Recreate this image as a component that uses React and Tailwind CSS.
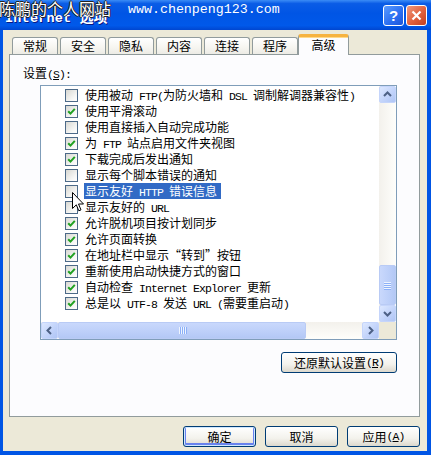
import React from "react";

const latin = "font-['Liberation_Mono',monospace] text-[11.5px] tracking-[-0.9px] whitespace-pre";

function Txt({ s }) {
  const parts = s.split(/([\x20-\x7e]+)/).filter(Boolean);
  return (
    <>
      {parts.map((p, i) =>
        /^[\x20-\x7e]+$/.test(p) ? (
          <span key={i} className={latin}>{p}</span>
        ) : (
          <span key={i}>{p}</span>
        )
      )}
    </>
  );
}

function Check({ checked }) {
  return (
    <span className="w-[13px] h-[13px] shrink-0 border border-[#4d6a88] bg-[linear-gradient(135deg,#d8d8d2,#f7f7f5_70%,#ffffff)] flex items-center justify-center">
      {checked && (
        <svg width="9" height="9" viewBox="0 0 9 9">
          <path d="M1.2 4.2 L3.5 6.6 L7.8 1.8" stroke="#21a121" strokeWidth="2" fill="none" />
        </svg>
      )}
    </span>
  );
}

const rows = [
  ["使用被动 FTP(为防火墙和 DSL 调制解调器兼容性)", false],
  ["使用平滑滚动", true],
  ["使用直接插入自动完成功能", false],
  ["为 FTP 站点启用文件夹视图", true],
  ["下载完成后发出通知", true],
  ["显示每个脚本错误的通知", false],
  ["显示友好 HTTP 错误信息", false, true],
  ["显示友好的 URL", false],
  ["允许脱机项目按计划同步", true],
  ["允许页面转换", true],
  ["在地址栏中显示“转到”按钮", true],
  ["重新使用启动快捷方式的窗口", true],
  ["自动检查 Internet Explorer 更新", true],
  ["总是以 UTF-8 发送 URL (需要重启动)", true],
];

const arrowPaths = {
  up: "M4 9 L7.5 5.5 L11 9",
  down: "M4 6 L7.5 9.5 L11 6",
  left: "M9 4 L5.5 7.5 L9 11",
  right: "M6 4 L9.5 7.5 L6 11",
};

function ArrowBtn({ dir }) {
  return (
    <div className="w-[17px] h-[17px] shrink-0 rounded-[2px] border border-[#c5d5fb] bg-[linear-gradient(135deg,#dde8ff,#c0d2fa_60%,#afc5f5)] flex items-center justify-center">
      <svg width="15" height="15" viewBox="0 0 15 15">
        <path d={arrowPaths[dir]} stroke="#4d6185" strokeWidth="2" fill="none" />
      </svg>
    </div>
  );
}

function Btn({ children, className, def }) {
  return (
    <div
      className={
        "h-[21px] rounded-[3px] border border-[#003c74] bg-[linear-gradient(180deg,#ffffff,#f3f2ec_60%,#dcd8cd)] flex items-center justify-center text-[12px] leading-none " +
        (def ? "shadow-[inset_0_0_0_1px_#cee7ff,inset_0_-1px_0_2px_#6982ee] " : "") +
        className
      }
    >
      {children}
    </div>
  );
}

function Tab({ label }) {
  return (
    <div className="w-[46px] h-[17px] mb-[1px] rounded-t-[3px] border border-b-0 border-[#919b9c] bg-[linear-gradient(180deg,#ffffff,#f6f5f0_60%,#ecebe5)] flex items-center justify-center text-[12px] leading-none">
      {label}
    </div>
  );
}

export default function App() {
  return (
    <div className="relative w-[431px] h-[455px] overflow-hidden bg-[#0055e5] font-['Noto_Sans_CJK_SC',sans-serif] text-[12px] text-black select-none">
      {/* title bar */}
      <div className="h-[30px] flex items-center pl-[5px] pr-[4px] bg-[linear-gradient(180deg,#3b8cf6_0%,#0a5ce6_12%,#0055e5_45%,#0059ea_85%,#0046d0_100%)]">
        <div className="flex-1 pt-[6px] flex items-baseline text-white font-bold [text-shadow:1px_1px_0_#0a1883]">
          <span className="font-['Liberation_Mono',monospace] text-[13.5px] tracking-[0.2px]">Internet</span>
          <span className="ml-[8px] text-[14px]">选项</span>
        </div>
        <div className="flex gap-[2px] pt-[1px]">
          <div className="w-[21px] h-[21px] rounded-[3px] border border-white bg-[linear-gradient(135deg,#5a9bff,#2a6df0_60%,#1c55d8)] flex items-center justify-center text-white font-bold text-[15px] leading-none font-['Liberation_Sans',sans-serif]">
            ?
          </div>
          <div className="w-[21px] h-[21px] rounded-[3px] border border-white bg-[linear-gradient(135deg,#ef9a7e,#e1603c_55%,#c4401f)] flex items-center justify-center">
            <svg width="13" height="13" viewBox="0 0 13 13">
              <path d="M2.5 2.5 L10.5 10.5 M10.5 2.5 L2.5 10.5" stroke="#fff" strokeWidth="2.2" />
            </svg>
          </div>
        </div>
      </div>

      {/* watermark */}
      <div className="absolute left-[-1px] top-[-2px] text-[16px] leading-[20px] text-white [text-shadow:1px_0_0_#222,-1px_0_0_#222,0_1px_0_#222,0_-1px_0_#222]">
        陈鹏的个人网站
      </div>
      <div className="absolute left-[128px] top-[1px] text-[13.3px] leading-[18px] text-white font-['Liberation_Mono',monospace] whitespace-pre">
        www.chenpeng123.com
      </div>

      {/* client area */}
      <div className="ml-[3px] mr-[4px] h-[421px] bg-[#ece9d8] flex flex-col">
        <div className="ml-[6px] mt-[4px] w-[411px] flex flex-col">
          {/* tabs */}
          <div className="relative z-10 h-[21px] mb-[-1px] pl-[3px] flex items-end gap-[2px]">
            {["常规", "安全", "隐私", "内容", "连接", "程序"].map((t) => (
              <Tab key={t} label={t} />
            ))}
            <div className="ml-[-2px] w-[51px] h-[21px] rounded-t-[3px] border-x border-[#919b9c] border-t-[3px] border-t-[#f6b340] bg-[#fcfcfe] flex items-center justify-center pb-[2px] text-[12px] leading-none shadow-[inset_0_1px_0_#ffd98a]">
              高级
            </div>
          </div>
          {/* panel */}
          <div className="h-[363px] border border-[#919b9c] bg-[#fcfcfe] flex flex-col">
            <div className="pl-[13px] pt-[10px] h-[26px] leading-[16px]">
              设置<span className={latin}>(</span>
              <span className={latin + " underline"}>S</span>
              <span className={latin}>):</span>
            </div>
            <div className="ml-[30px] mt-[4px] w-[357px] h-[255px] border border-[#7f9db9] bg-white flex flex-col">
              <div className="flex h-[236px]">
                <div className="flex-1 pt-[1px] pl-[24px] flex flex-col">
                  {rows.map(([label, checked, sel], i) => (
                    <div key={i} className="h-[16px] flex items-center whitespace-nowrap">
                      <Check checked={checked} />
                      <span
                        className={
                          "ml-[6px] px-[1px] h-[16px] leading-[16px] " +
                          (sel ? "bg-[#316ac5] text-white pr-[4px]" : "")
                        }
                      >
                        <Txt s={label} />
                      </span>
                    </div>
                  ))}
                </div>
                {/* vertical scrollbar */}
                <div className="w-[17px] flex flex-col bg-[linear-gradient(90deg,#f3f1ec,#fefefb)]">
                  <ArrowBtn dir="up" />
                  <div className="flex-1 flex flex-col justify-end">
                    <div className="h-[40px] rounded-[2px] border border-[#b9cbf5] bg-[linear-gradient(90deg,#c9d8fc,#bccff9_60%,#b3c8f5)] flex flex-col items-center justify-center gap-[1px]">
                      {[0, 1, 2, 3].map((k) => (
                        <div key={k} className="w-[7px] h-[1px] bg-[#eef4fe] shadow-[0_1px_0_#8cb0f8]" />
                      ))}
                    </div>
                  </div>
                  <ArrowBtn dir="down" />
                </div>
              </div>
              {/* horizontal scrollbar */}
              <div className="flex h-[17px]">
                <div className="flex-1 flex bg-[linear-gradient(180deg,#f3f1ec,#fefefb)]">
                  <ArrowBtn dir="left" />
                  <div className="flex-1 flex">
                    <div className="w-[248px] rounded-[2px] border border-[#b9cbf5] bg-[linear-gradient(180deg,#c9d8fc,#bccff9_60%,#b3c8f5)] flex items-center justify-center gap-[1px]">
                      {[0, 1, 2, 3].map((k) => (
                        <div key={k} className="w-[1px] h-[7px] bg-[#eef4fe] shadow-[1px_0_0_#8cb0f8]" />
                      ))}
                    </div>
                  </div>
                  <ArrowBtn dir="right" />
                </div>
                <div className="w-[17px] bg-[#ece9d8]" />
              </div>
            </div>
            <div className="mt-[12px] pr-[22px] flex justify-end">
              <Btn className="w-[116px] h-[20px]">
                还原默认设置<span className={latin}>(</span>
                <span className={latin + " underline"}>R</span>
                <span className={latin}>)</span>
              </Btn>
            </div>
          </div>
        </div>
        {/* bottom buttons */}
        <div className="mt-[9px] pr-[7px] flex justify-end gap-[9px]">
          <Btn def className="w-[73px]">确定</Btn>
          <Btn className="w-[73px]">取消</Btn>
          <Btn className="w-[73px]">
            应用<span className={latin}>(</span>
            <span className={latin + " underline"}>A</span>
            <span className={latin}>)</span>
          </Btn>
        </div>
      </div>

      {/* mouse cursor */}
      <svg className="absolute left-[72px] top-[192px]" width="13" height="21" viewBox="0 0 13 21">
        <path
          d="M0.5 0.5 L0.5 16.5 L4.3 12.8 L6.8 18.8 L9 17.9 L6.5 12 L11.5 12 Z"
          fill="#fff"
          stroke="#000"
          strokeWidth="1"
        />
      </svg>
    </div>
  );
}
